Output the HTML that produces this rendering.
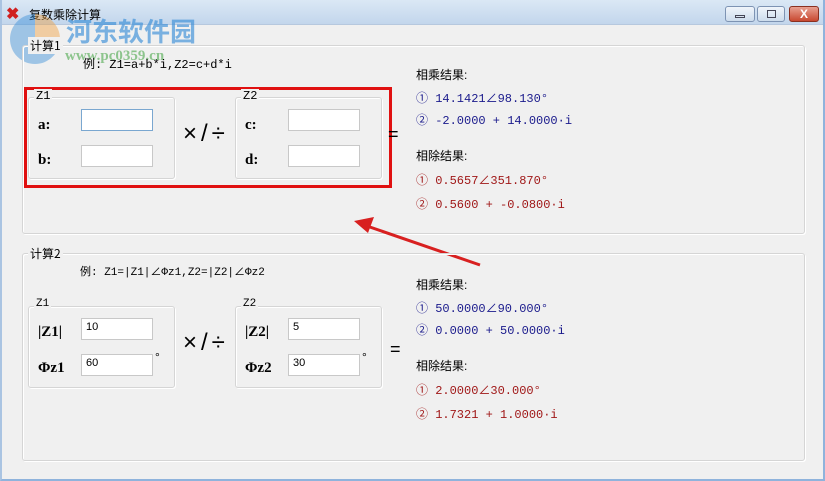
<!DOCTYPE html>
<html><head><meta charset="utf-8"><style>
*{margin:0;padding:0;box-sizing:border-box}
body{width:825px;height:481px;overflow:hidden;background:#f0f0f0;font-family:"Liberation Sans","Noto Sans CJK SC",sans-serif;position:relative}
.a{position:absolute}
.tb{left:0;top:0;width:825px;height:25px;background:linear-gradient(#dbe8f5,#c3d6ec);border-bottom:1px solid #b6c8de}
.frame{left:0;top:0;width:825px;height:481px;border:1px solid #6c8cae;border-top:none;border-left:2px solid #aac4e2;border-right:2px solid #8fb3dc;border-bottom:2px solid #8fb3dc}
.gb{border:1px solid #d5d5d5;border-radius:3px;box-shadow:inset 1px 1px 0 #fff,1px 1px 0 #fff}
.lbl{font-size:12px;background:#f0f0f0;padding:0 2px;color:#000;font-family:"Liberation Mono","Noto Sans CJK SC",monospace}
.in{background:#fff;border:1px solid #c8c8c8;width:72px;height:22px;font-size:11px;padding:2px 4px;font-family:"Liberation Sans",sans-serif}
.b{font-weight:bold;font-family:"Liberation Serif",serif;font-size:15px}
.m{font-family:"Liberation Mono","Noto Sans CJK SC",monospace;font-size:12px}
.blue{color:#1a1a8c}.red{color:#a01818}
.op{font-size:24px;font-family:"Liberation Sans",sans-serif;letter-spacing:4px}
.btn{top:6px;height:16px;border:1px solid #7d93b3;border-radius:3px;background:linear-gradient(#f0f5fb,#cddcec)}
</style></head><body>
<div class="a tb"></div>
<div class="a" style="left:6px;top:4px;color:#d02020;font-size:16px;font-weight:bold">✖</div>
<div class="a" style="left:29px;top:6px;font-size:12px">复数乘除计算</div>
<div class="a btn" style="left:725px;width:30px"><div class="a" style="left:9px;top:8px;width:10px;height:3px;border:1px solid #445"></div></div>
<div class="a btn" style="left:757px;width:28px"><div class="a" style="left:9px;top:3px;width:9px;height:8px;border:1px solid #445"></div></div>
<div class="a btn" style="left:789px;width:30px;background:linear-gradient(#e8a090,#c84830);border-color:#8a3020;color:#fff;font-size:12px;font-weight:bold;text-align:center;line-height:14px">X</div>
<div class="a" style="left:10px;top:14px;width:50px;height:50px;border-radius:50%;background:conic-gradient(#f0a040 0 30%,#3a8fd8 30% 100%);opacity:.45"></div>
<div class="a" style="left:66px;top:12px;font-size:26px;font-weight:bold;color:#3a8fd8;opacity:.65;font-family:'Noto Sans CJK SC',sans-serif">河东软件园</div>
<div class="a" style="left:65px;top:48px;font-size:15px;font-weight:bold;color:#2a9a2a;opacity:.5;font-family:'Liberation Serif',serif">www.pc0359.cn</div>

<div class="a gb" style="left:22px;top:45px;width:783px;height:189px"></div>
<div class="a lbl" style="left:28px;top:37px;font-family:'Noto Sans CJK SC',sans-serif">计算1</div>
<div class="a m" style="left:83px;top:55px">例: Z1=a+b*i,Z2=c+d*i</div>
<div class="a" style="left:24px;top:87px;width:368px;height:101px;border:3px solid #e01010"></div>
<div class="a gb" style="left:28px;top:97px;width:147px;height:82px"></div>
<div class="a lbl" style="left:34px;top:89px">Z1</div>
<div class="a b" style="left:38px;top:117px">a:</div><div class="a in" style="left:81px;top:109px;border-color:#7aa7d0"></div>
<div class="a b" style="left:38px;top:152px">b:</div><div class="a in" style="left:81px;top:145px"></div>
<div class="a op" style="left:183px;top:120px">×/÷</div>
<div class="a gb" style="left:235px;top:97px;width:147px;height:82px"></div>
<div class="a lbl" style="left:241px;top:89px">Z2</div>
<div class="a b" style="left:245px;top:117px">c:</div><div class="a in" style="left:288px;top:109px"></div>
<div class="a b" style="left:245px;top:152px">d:</div><div class="a in" style="left:288px;top:145px"></div>
<div class="a op" style="left:388px;top:124px;font-size:18px">=</div>
<div class="a" style="left:416px;top:66px;font-size:12px">相乘结果:</div>
<div class="a m blue" style="left:416px;top:89px">① 14.1421∠98.130°</div>
<div class="a m blue" style="left:416px;top:111px">② -2.0000 + 14.0000·i</div>
<div class="a" style="left:416px;top:147px;font-size:12px">相除结果:</div>
<div class="a m red" style="left:416px;top:171px">① 0.5657∠351.870°</div>
<div class="a m red" style="left:416px;top:195px">② 0.5600 + -0.0800·i</div>

<svg class="a" style="left:350px;top:215px" width="135" height="55"><line x1="130" y1="50" x2="14" y2="10" stroke="#d82020" stroke-width="3"/><polygon points="4,6 24,2 18,18" fill="#d82020"/></svg>

<div class="a gb" style="left:22px;top:253px;width:783px;height:208px"></div>
<div class="a lbl" style="left:28px;top:245px;font-family:'Noto Sans CJK SC',sans-serif">计算2</div>
<div class="a m" style="left:80px;top:263px;font-size:11px">例: Z1=|Z1|∠Φz1,Z2=|Z2|∠Φz2</div>
<div class="a gb" style="left:28px;top:306px;width:147px;height:82px"></div>
<div class="a lbl" style="left:34px;top:298px;font-size:11px">Z1</div>
<div class="a b" style="left:38px;top:324px">|Z1|</div><div class="a in" style="left:81px;top:318px">10</div>
<div class="a b" style="left:38px;top:360px">Φz1</div><div class="a in" style="left:81px;top:354px">60</div>
<div class="a" style="left:155px;top:350px;font-size:12px">°</div>
<div class="a op" style="left:183px;top:329px">×/÷</div>
<div class="a gb" style="left:235px;top:306px;width:147px;height:82px"></div>
<div class="a lbl" style="left:241px;top:298px;font-size:11px">Z2</div>
<div class="a b" style="left:245px;top:324px">|Z2|</div><div class="a in" style="left:288px;top:318px">5</div>
<div class="a b" style="left:245px;top:360px">Φz2</div><div class="a in" style="left:288px;top:354px">30</div>
<div class="a" style="left:362px;top:350px;font-size:12px">°</div>
<div class="a op" style="left:390px;top:339px;font-size:18px">=</div>
<div class="a" style="left:416px;top:276px;font-size:12px">相乘结果:</div>
<div class="a m blue" style="left:416px;top:299px">① 50.0000∠90.000°</div>
<div class="a m blue" style="left:416px;top:321px">② 0.0000 + 50.0000·i</div>
<div class="a" style="left:416px;top:357px;font-size:12px">相除结果:</div>
<div class="a m red" style="left:416px;top:381px">① 2.0000∠30.000°</div>
<div class="a m red" style="left:416px;top:405px">② 1.7321 + 1.0000·i</div>
<div class="a frame"></div>
</body></html>
